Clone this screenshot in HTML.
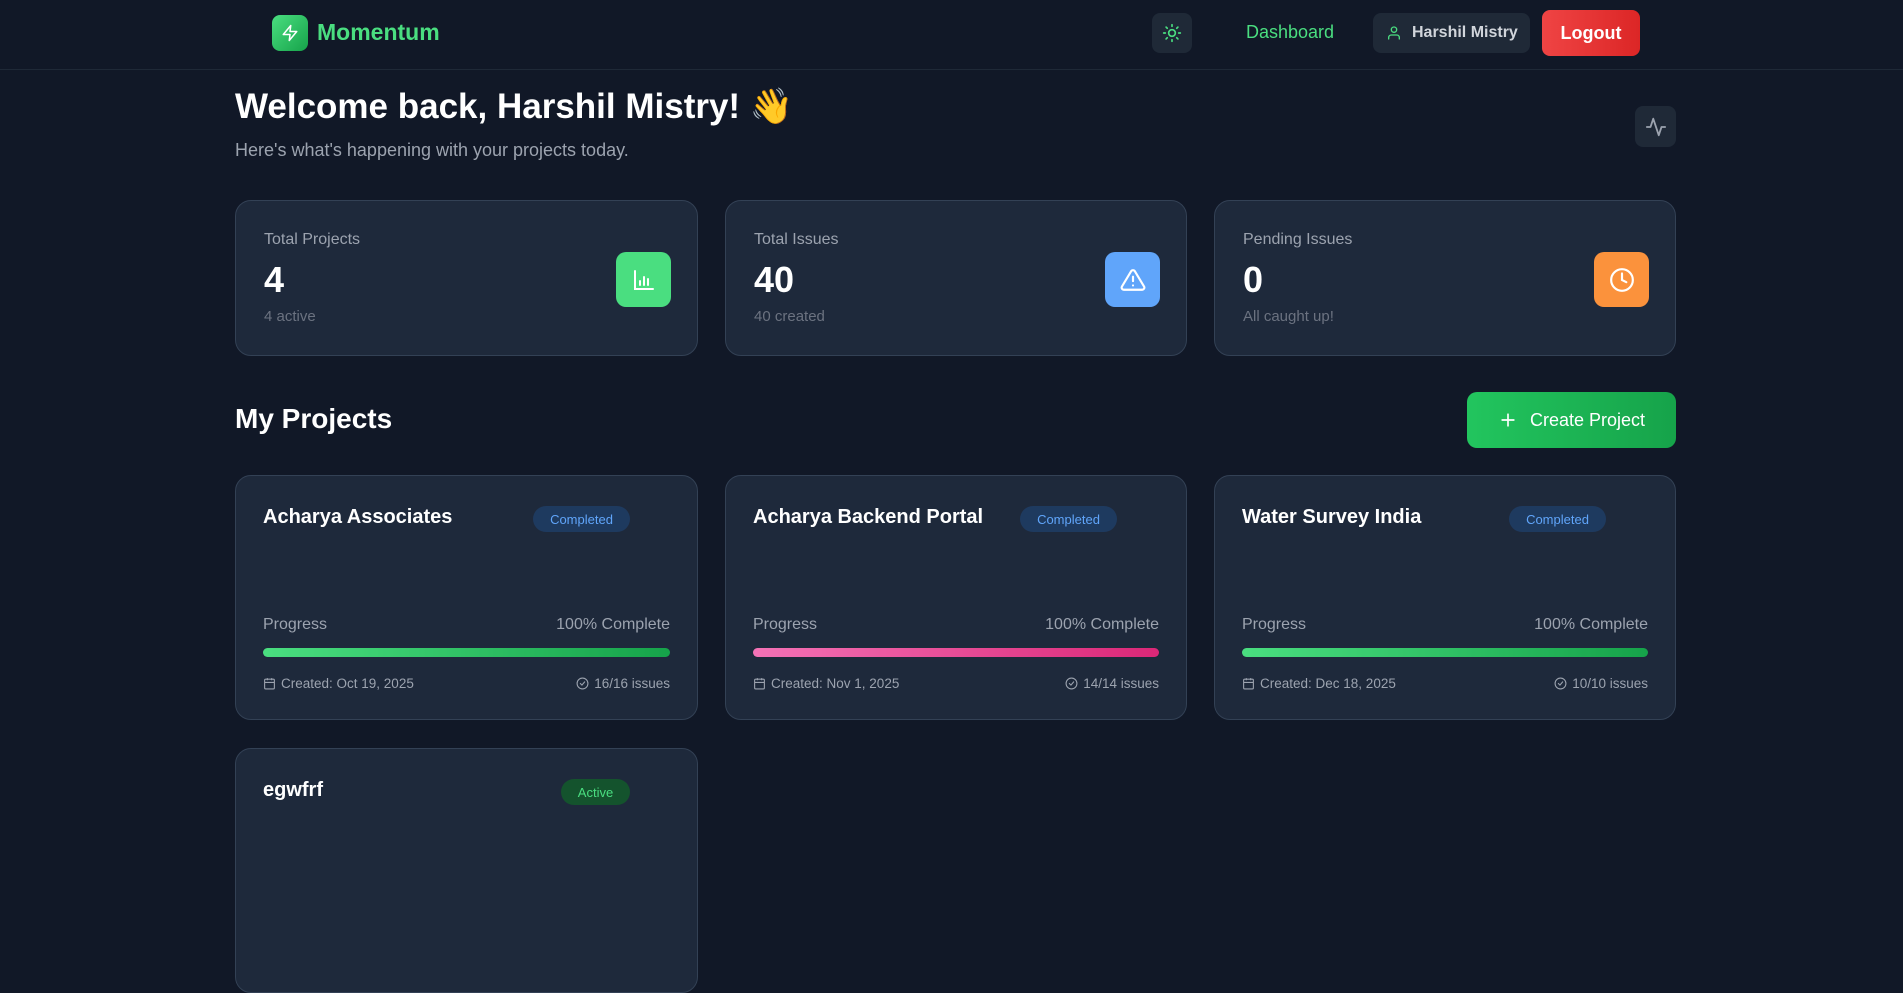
<!DOCTYPE html>
<html><head><meta charset="utf-8"><style>
*{box-sizing:border-box;margin:0;padding:0}
body{width:1903px;height:865px;overflow:hidden;background:#111827;font-family:"Liberation Sans",sans-serif;color:#fff;position:relative}
.abs{position:absolute}
.hdr{position:absolute;left:0;top:0;width:1903px;height:70px;border-bottom:1px solid #1f2937}
.card{position:absolute;background:#1e293b;border:1px solid #334155;border-radius:16px}
.ib{position:absolute;width:55px;height:55px;border-radius:10px;display:flex;align-items:center;justify-content:center}
.lbl{position:absolute;font-size:16px;color:#9ca3af}
.num{position:absolute;font-size:36px;font-weight:bold;color:#fff}
.sub{position:absolute;font-size:15px;color:#6b7280}
.pt{position:absolute;left:27px;top:30px;font-size:20px;font-weight:bold;color:#fff}
.badge{position:absolute;top:30px;height:26px;border-radius:13px;font-size:13px;display:flex;align-items:center;justify-content:center}
.pl{position:absolute;left:27px;top:140px;font-size:16px;color:#9ca3af}
.pr{position:absolute;right:27px;top:140px;font-size:16px;color:#9ca3af}
.bar{position:absolute;left:27px;right:27px;top:172px;height:9px;border-radius:5px}
.ft{position:absolute;top:200px;font-size:13.5px;color:#9ca3af;display:flex;align-items:center;gap:5px}
</style></head><body>
<div class="hdr"></div>
<div class="abs" style="left:272px;top:15px;width:36px;height:36px;border-radius:8px;background:linear-gradient(135deg,#4ade80,#16a34a);display:flex;align-items:center;justify-content:center">
<svg width="18" height="18" viewBox="0 0 24 24" fill="none" stroke="#fff" stroke-width="2" stroke-linejoin="round"><path d="M13 2L3 14h9l-1 8 10-12h-9l1-8z"/></svg></div>
<div class="abs" style="left:317px;top:19px;font-size:23px;font-weight:bold;color:#4ade80">Momentum</div>
<div class="abs" style="left:1152px;top:13px;width:40px;height:40px;border-radius:8px;background:#1f2937;display:flex;align-items:center;justify-content:center">
<svg width="20" height="20" viewBox="0 0 24 24" fill="none" stroke="#4ade80" stroke-width="2" stroke-linecap="round"><circle cx="12" cy="12" r="4"/><path d="M12 2v2M12 20v2M4.9 4.9l1.4 1.4M17.7 17.7l1.4 1.4M2 12h2M20 12h2M4.9 19.1l1.4-1.4M17.7 6.3l1.4-1.4"/></svg></div>
<div class="abs" style="left:1246px;top:22px;font-size:18px;color:#4ade80">Dashboard</div>
<div class="abs" style="left:1373px;top:13px;width:157px;height:40px;border-radius:8px;background:#1f2937;display:flex;align-items:center;padding-left:13px;gap:10px;font-size:16px;color:#d1d5db;font-weight:bold">
<svg width="16" height="16" viewBox="0 0 24 24" fill="none" stroke="#4ade80" stroke-width="2" stroke-linecap="round"><circle cx="12" cy="7" r="4"/><path d="M4 21v-2a4 4 0 0 1 4-4h8a4 4 0 0 1 4 4v2"/></svg>Harshil Mistry</div>
<div class="abs" style="left:1542px;top:10px;width:98px;height:46px;border-radius:8px;background:linear-gradient(90deg,#ef4444,#dc2626);display:flex;align-items:center;justify-content:center;font-size:18px;font-weight:bold">Logout</div>

<div class="abs" style="left:235px;top:86px;font-size:35px;font-weight:bold">Welcome back, Harshil Mistry! 👋</div>
<div class="abs" style="left:235px;top:140px;font-size:18px;color:#9ca3af">Here's what's happening with your projects today.</div>
<div class="abs" style="left:1635px;top:106px;width:41px;height:41px;border-radius:8px;background:#1f2937;display:flex;align-items:center;justify-content:center">
<svg width="22" height="22" viewBox="0 0 24 24" fill="none" stroke="#9ca3af" stroke-width="2" stroke-linecap="round" stroke-linejoin="round"><path d="M22 12h-4l-3 9L9 3l-3 9H2"/></svg></div>

<div class="card" style="left:235px;top:200px;width:463px;height:156px">
<div class="lbl" style="left:28px;top:30px">Total Projects</div><div class="num" style="left:28px;top:58px">4</div><div class="sub" style="left:28px;top:107px">4 active</div>
<div class="ib" style="left:380px;top:51px;background:#4ade80"><svg width="24" height="24" viewBox="0 0 24 24" fill="none" stroke="#fff" stroke-width="2" stroke-linecap="round"><path d="M3 3v18h18M8 17v-4M12 17V9M16 17v-6"/></svg></div></div>
<div class="card" style="left:725px;top:200px;width:462px;height:156px">
<div class="lbl" style="left:28px;top:30px">Total Issues</div><div class="num" style="left:28px;top:58px">40</div><div class="sub" style="left:28px;top:107px">40 created</div>
<div class="ib" style="left:379px;top:51px;background:#60a5fa"><svg width="26" height="26" viewBox="0 0 24 24" fill="none" stroke="#fff" stroke-width="2" stroke-linecap="round" stroke-linejoin="round"><path d="M10.3 3.9L1.8 18a2 2 0 0 0 1.7 3h17a2 2 0 0 0 1.7-3L13.7 3.9a2 2 0 0 0-3.4 0zM12 9v4M12 17h.01"/></svg></div></div>
<div class="card" style="left:1214px;top:200px;width:462px;height:156px">
<div class="lbl" style="left:28px;top:30px">Pending Issues</div><div class="num" style="left:28px;top:58px">0</div><div class="sub" style="left:28px;top:107px">All caught up!</div>
<div class="ib" style="left:379px;top:51px;background:#fb923c"><svg width="26" height="26" viewBox="0 0 24 24" fill="none" stroke="#fff" stroke-width="2" stroke-linecap="round"><circle cx="12" cy="12" r="10"/><path d="M12 6v6l4 2"/></svg></div></div>

<div class="abs" style="left:235px;top:403px;font-size:28px;font-weight:bold">My Projects</div>
<div class="abs" style="left:1467px;top:392px;width:209px;height:56px;border-radius:10px;background:linear-gradient(90deg,#22c55e,#16a34a);display:flex;align-items:center;justify-content:center;gap:12px;font-size:18px">
<svg width="20" height="20" viewBox="0 0 24 24" fill="none" stroke="#fff" stroke-width="2" stroke-linecap="round"><path d="M12 5v14M5 12h14"/></svg>Create Project</div>

<svg width="0" height="0" style="position:absolute"><defs>
<symbol id="cal" viewBox="0 0 24 24"><rect x="3" y="4" width="18" height="18" rx="2" fill="none" stroke="#9ca3af" stroke-width="2"/><path d="M3 10h18M8 2v4M16 2v4" stroke="#9ca3af" stroke-width="2" fill="none"/></symbol>
<symbol id="chk" viewBox="0 0 24 24"><circle cx="12" cy="12" r="10" fill="none" stroke="#9ca3af" stroke-width="2"/><path d="M8 12l3 3 5-6" fill="none" stroke="#9ca3af" stroke-width="2" stroke-linecap="round"/></symbol>
</defs></svg>

<div class="card" style="left:235px;top:475px;width:463px;height:245px">
<div class="pt">Acharya Associates</div><div class="badge" style="left:297px;width:97px;background:#1e3a5f;color:#60a5fa">Completed</div>
<div class="pl">Progress</div><div class="pr">100% Complete</div><div class="bar" style="background:linear-gradient(90deg,#4ade80,#16a34a)"></div>
<div class="ft" style="left:27px"><svg width="13" height="13"><use href="#cal"/></svg>Created: Oct 19, 2025</div><div class="ft" style="right:27px"><svg width="13" height="13"><use href="#chk"/></svg>16/16 issues</div></div>
<div class="card" style="left:725px;top:475px;width:462px;height:245px">
<div class="pt">Acharya Backend Portal</div><div class="badge" style="left:294px;width:97px;background:#1e3a5f;color:#60a5fa">Completed</div>
<div class="pl">Progress</div><div class="pr">100% Complete</div><div class="bar" style="background:linear-gradient(90deg,#f472b6,#db2777)"></div>
<div class="ft" style="left:27px"><svg width="13" height="13"><use href="#cal"/></svg>Created: Nov 1, 2025</div><div class="ft" style="right:27px"><svg width="13" height="13"><use href="#chk"/></svg>14/14 issues</div></div>
<div class="card" style="left:1214px;top:475px;width:462px;height:245px">
<div class="pt">Water Survey India</div><div class="badge" style="left:294px;width:97px;background:#1e3a5f;color:#60a5fa">Completed</div>
<div class="pl">Progress</div><div class="pr">100% Complete</div><div class="bar" style="background:linear-gradient(90deg,#4ade80,#16a34a)"></div>
<div class="ft" style="left:27px"><svg width="13" height="13"><use href="#cal"/></svg>Created: Dec 18, 2025</div><div class="ft" style="right:27px"><svg width="13" height="13"><use href="#chk"/></svg>10/10 issues</div></div>
<div class="card" style="left:235px;top:748px;width:463px;height:245px">
<div class="pt">egwfrf</div><div class="badge" style="left:325px;width:69px;background:#14532d;color:#4ade80">Active</div></div>
</body></html>
